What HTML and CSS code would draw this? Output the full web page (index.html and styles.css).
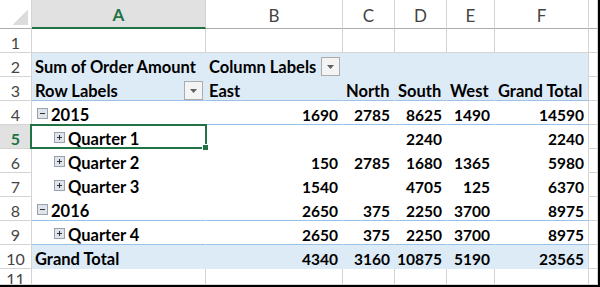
FILE: index.html
```html
<!DOCTYPE html>
<html lang="en">
<head>
    <meta charset="UTF-8">
    <title>PivotTable - Sum of Order Amount</title>
    <link rel="stylesheet" href="styles.css">
</head>
<body>
<div class="sheet">
    <!-- column headers -->
    <div class="c corner"></div>
    <div class="c h sel">A</div>
    <div class="c h">B</div>
    <div class="c h">C</div>
    <div class="c h">D</div>
    <div class="c h">E</div>
    <div class="c h">F</div>
    <div class="c h"></div>

    <!-- row 1 -->
    <div class="c rh">1</div>
    <div class="c"></div><div class="c"></div><div class="c"></div><div class="c"></div>
    <div class="c"></div><div class="c"></div><div class="c"></div>

    <!-- row 2 -->
    <div class="c rh">2</div>
    <div class="c p blue">Sum of Order Amount</div>
    <div class="c p blue">Column Labels
        <svg class="dd" width="19" height="19" viewBox="0 0 19 19"><rect x="0.5" y="0.5" width="18" height="18" fill="#f4f4f4" stroke="#ababab"/><path d="M6 8h7l-3.5 4z" fill="#606060"/></svg>
    </div>
    <div class="c p blue"></div><div class="c p blue"></div><div class="c p blue"></div>
    <div class="c p blue last"></div>
    <div class="c"></div>

    <!-- row 3 -->
    <div class="c rh">3</div>
    <div class="c p blue line">Row Labels
        <svg class="dd" width="19" height="19" viewBox="0 0 19 19"><rect x="0.5" y="0.5" width="18" height="18" fill="#f4f4f4" stroke="#ababab"/><path d="M6 8h7l-3.5 4z" fill="#606060"/></svg>
    </div>
    <div class="c p blue line">East</div>
    <div class="c p blue line">North</div>
    <div class="c p blue line">South</div>
    <div class="c p blue line">West</div>
    <div class="c p blue line last">Grand Total</div>
    <div class="c"></div>

    <!-- row 4 -->
    <div class="c rh">4</div>
    <div class="c p line"><svg class="tog" width="11" height="11" viewBox="0 0 11 11"><rect x="0.5" y="0.5" width="10" height="10" fill="#dfe4ea" stroke="#97a3b2"/><path d="M3 5.5h5" stroke="#333" stroke-width="1"/></svg>2015</div>
    <div class="c p line num">1690</div>
    <div class="c p line num">2785</div>
    <div class="c p line num">8625</div>
    <div class="c p line num">1490</div>
    <div class="c p line num last">14590</div>
    <div class="c"></div>

    <!-- row 5 -->
    <div class="c rh selrow">5</div>
    <div class="c p active q"><svg class="tog" width="11" height="11" viewBox="0 0 11 11"><rect x="0.5" y="0.5" width="10" height="10" fill="#dfe4ea" stroke="#97a3b2"/><path d="M3 5.5h5M5.5 3v5" stroke="#333" stroke-width="1"/></svg>Quarter 1</div>
    <div class="c p num"></div>
    <div class="c p num"></div>
    <div class="c p num">2240</div>
    <div class="c p num"></div>
    <div class="c p num last">2240</div>
    <div class="c"></div>

    <!-- row 6 -->
    <div class="c rh">6</div>
    <div class="c p q"><svg class="tog" width="11" height="11" viewBox="0 0 11 11"><rect x="0.5" y="0.5" width="10" height="10" fill="#dfe4ea" stroke="#97a3b2"/><path d="M3 5.5h5M5.5 3v5" stroke="#333" stroke-width="1"/></svg>Quarter 2</div>
    <div class="c p num">150</div>
    <div class="c p num">2785</div>
    <div class="c p num">1680</div>
    <div class="c p num">1365</div>
    <div class="c p num last">5980</div>
    <div class="c"></div>

    <!-- row 7 -->
    <div class="c rh">7</div>
    <div class="c p q"><svg class="tog" width="11" height="11" viewBox="0 0 11 11"><rect x="0.5" y="0.5" width="10" height="10" fill="#dfe4ea" stroke="#97a3b2"/><path d="M3 5.5h5M5.5 3v5" stroke="#333" stroke-width="1"/></svg>Quarter 3</div>
    <div class="c p num">1540</div>
    <div class="c p num"></div>
    <div class="c p num">4705</div>
    <div class="c p num">125</div>
    <div class="c p num last">6370</div>
    <div class="c"></div>

    <!-- row 8 -->
    <div class="c rh">8</div>
    <div class="c p line"><svg class="tog" width="11" height="11" viewBox="0 0 11 11"><rect x="0.5" y="0.5" width="10" height="10" fill="#dfe4ea" stroke="#97a3b2"/><path d="M3 5.5h5" stroke="#333" stroke-width="1"/></svg>2016</div>
    <div class="c p line num">2650</div>
    <div class="c p line num">375</div>
    <div class="c p line num">2250</div>
    <div class="c p line num">3700</div>
    <div class="c p line num last">8975</div>
    <div class="c"></div>

    <!-- row 9 -->
    <div class="c rh">9</div>
    <div class="c p q line"><svg class="tog" width="11" height="11" viewBox="0 0 11 11"><rect x="0.5" y="0.5" width="10" height="10" fill="#dfe4ea" stroke="#97a3b2"/><path d="M3 5.5h5M5.5 3v5" stroke="#333" stroke-width="1"/></svg>Quarter 4</div>
    <div class="c p line num">2650</div>
    <div class="c p line num">375</div>
    <div class="c p line num">2250</div>
    <div class="c p line num">3700</div>
    <div class="c p line num last">8975</div>
    <div class="c"></div>

    <!-- row 10 -->
    <div class="c rh">10</div>
    <div class="c p blue">Grand Total</div>
    <div class="c p blue num">4340</div>
    <div class="c p blue num">3160</div>
    <div class="c p blue num">10875</div>
    <div class="c p blue num">5190</div>
    <div class="c p blue num last">23565</div>
    <div class="c"></div>

    <!-- row 11 -->
    <div class="c rh">11</div>
    <div class="c"></div><div class="c"></div><div class="c"></div><div class="c"></div>
    <div class="c"></div><div class="c"></div><div class="c"></div>
</div>
</body>
</html>
```

FILE: styles.css
```css
body {
    margin: 0;
    background: white;
    overflow: hidden;
}
.sheet {
    display: grid;
    grid-template-columns: 32px 174px 137px 52px 52px 48px 94px 9px;
    grid-template-rows: 29px repeat(10, 24px) 16px;
    width: 598px;
    border-right: 2px solid black;
    border-bottom: 2px solid black;
    font-family: Lato, "Liberation Sans", sans-serif;
}
.c {
    box-sizing: border-box;
    display: flex;
    align-items: center;
    padding: 4px 3px 0;
    border-right: 1px solid #d4d4d4;
    border-bottom: 1px solid #d4d4d4;
    font-size: 16.5px;
    font-weight: bold;
    color: black;
    white-space: nowrap;
    overflow: hidden;
}
.corner {
    background: linear-gradient(135deg, transparent 50%, #dcdcdc 50%) no-repeat;
    background-size: 15px 15px;
    background-position: 13px 10px;
    border-bottom-color: #ababab;
}
.h {
    justify-content: center;
    padding: 2px 0 0;
    font-weight: normal;
    color: #444;
    font-size: 17px;
    border-bottom-color: #ababab;
}
.h.sel {
    background: #e1e1e1;
    color: #217346;
    font-weight: bold;
    border-bottom: 2px solid #217346;
}
.rh {
    justify-content: center;
    padding: 3px 0 0;
    font-weight: normal;
    color: #444;
    font-size: 16px;
}
.rh.selrow {
    background: #e1e1e1;
    color: #217346;
    font-weight: bold;
}
.p {
    border-color: transparent;
}
.p.blue {
    background: #ddebf7;
}
.p.line {
    border-bottom-color: #9bc2e6;
}
.p.last {
    border-right-color: #d4d4d4;
}
.num {
    justify-content: flex-end;
    padding-right: 4px;
    font-size: 15.5px;
}
.tog {
    flex: none;
    margin: 0 3px 2px 2px;
}
.q .tog {
    margin-left: 19px;
}
.dd {
    flex: none;
    margin-left: auto;
    margin-right: -1px;
}
.active {
    position: relative;
    overflow: visible;
}
.active::after {
    content: "";
    position: absolute;
    top: -1px;
    left: -2px;
    right: -2px;
    bottom: -1px;
    border: 2px solid #217346;
    z-index: 2;
}
.active::before {
    content: "";
    position: absolute;
    right: -4px;
    bottom: -3px;
    width: 5px;
    height: 5px;
    background: #217346;
    border: 1px solid white;
    z-index: 3;
}
```
